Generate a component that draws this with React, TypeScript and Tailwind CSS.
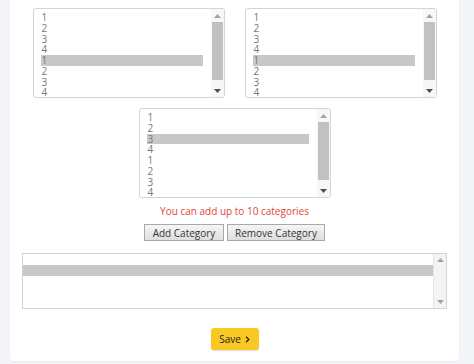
import React from 'react';

const FONT = { fontFamily: '"Open Sans", "Liberation Sans", sans-serif' };

function Arrow({ dir, dark }: { dir: 'up' | 'down'; dark?: boolean }) {
  return (
    <svg width="7" height="4" viewBox="0 0 7 4" className={dark ? 'fill-[#505050]' : 'fill-[#a3a3a3]'}>
      {dir === 'up' ? <path d="M0 4 L3.5 0 L7 4Z" /> : <path d="M0 0 L3.5 4 L7 0Z" />}
    </svg>
  );
}

interface ListBoxProps {
  items: string[];
  selected: number;
}

function ListBox({ items, selected }: ListBoxProps) {
  return (
    <div className="w-[192px] h-[90px] flex border border-[#d4d4d4] rounded-[3px] bg-white overflow-hidden">
      <div className="flex-1 pl-[7px] pr-[8px] pt-[3px] overflow-hidden">
        {items.map((item, i) => (
          <div
            key={i}
            className={`h-[10.75px] leading-[10.75px] text-[10px] text-[#777] pl-[1px] ${i === selected ? 'bg-[#c8c8c8]' : ''}`}
          >
            {item}
          </div>
        ))}
      </div>
      <div className="w-[13px] flex flex-col bg-[#f7f7f7]">
        <div className="h-[13px] flex items-center justify-center">
          <Arrow dir="up" />
        </div>
        <div className="flex-1 px-[1px]">
          <div className="h-[58px] bg-[#c1c1c1]" />
        </div>
        <div className="h-[13px] flex items-center justify-center">
          <Arrow dir="down" dark />
        </div>
      </div>
    </div>
  );
}

const NUMS = ['1', '2', '3', '4', '1', '2', '3', '4'];

export default function App() {
  return (
    <div className="min-h-[364px] bg-[#f3f5f8] pb-[3px]" style={FONT}>
      <div className="ml-[10px] w-[449px] bg-white rounded-b-[4px] shadow-[0_1px_2px_rgba(0,0,0,0.06)] pt-[8px] pb-[11px]">
        <div className="flex justify-center gap-[20px]">
          <ListBox items={NUMS} selected={4} />
          <ListBox items={NUMS} selected={4} />
        </div>

        <div className="mt-[10px] flex justify-center">
          <ListBox items={NUMS} selected={2} />
        </div>

        <p className="mt-[7px] text-center text-[10px] leading-[13px] text-[#e3443a]">
          You can add up to 10 categories
        </p>

        <div className="mt-[6px] flex justify-center gap-[3px]">
          <button className="h-[17px] w-[80px] border border-[#a9a9a9] bg-gradient-to-b from-[#f6f6f6] to-[#dedede] text-[10px] leading-none text-[#333]">
            Add Category
          </button>
          <button className="h-[17px] w-[98px] border border-[#a9a9a9] bg-gradient-to-b from-[#f6f6f6] to-[#dedede] text-[10px] leading-none text-[#333]">
            Remove Category
          </button>
        </div>

        <div className="mt-[12px] mx-[12px] h-[56px] flex border border-[#d4d4d4] bg-white">
          <div className="flex-1 pt-[11px]">
            <div className="h-[11px] bg-[#c8c8c8]" />
          </div>
          <div className="w-[13px] flex flex-col justify-between border-l border-[#e6e6e6] bg-[#f4f4f4] py-[4px]">
            <div className="flex justify-center">
              <Arrow dir="up" />
            </div>
            <div className="flex justify-center">
              <Arrow dir="down" />
            </div>
          </div>
        </div>

        <div className="mt-[19px] flex justify-center">
          <button className="h-[22px] w-[48px] rounded-[3px] bg-[#fac822] shadow-[0_1px_1px_rgba(0,0,0,0.12)] text-[10px] text-[#222] flex items-center justify-center gap-[4px]">
            <span>Save</span>
            <svg width="5" height="7" viewBox="0 0 5 7" fill="none" stroke="#222" strokeWidth="1.2">
              <path d="M1 0.8 L3.8 3.5 L1 6.2" />
            </svg>
          </button>
        </div>
      </div>
    </div>
  );
}
